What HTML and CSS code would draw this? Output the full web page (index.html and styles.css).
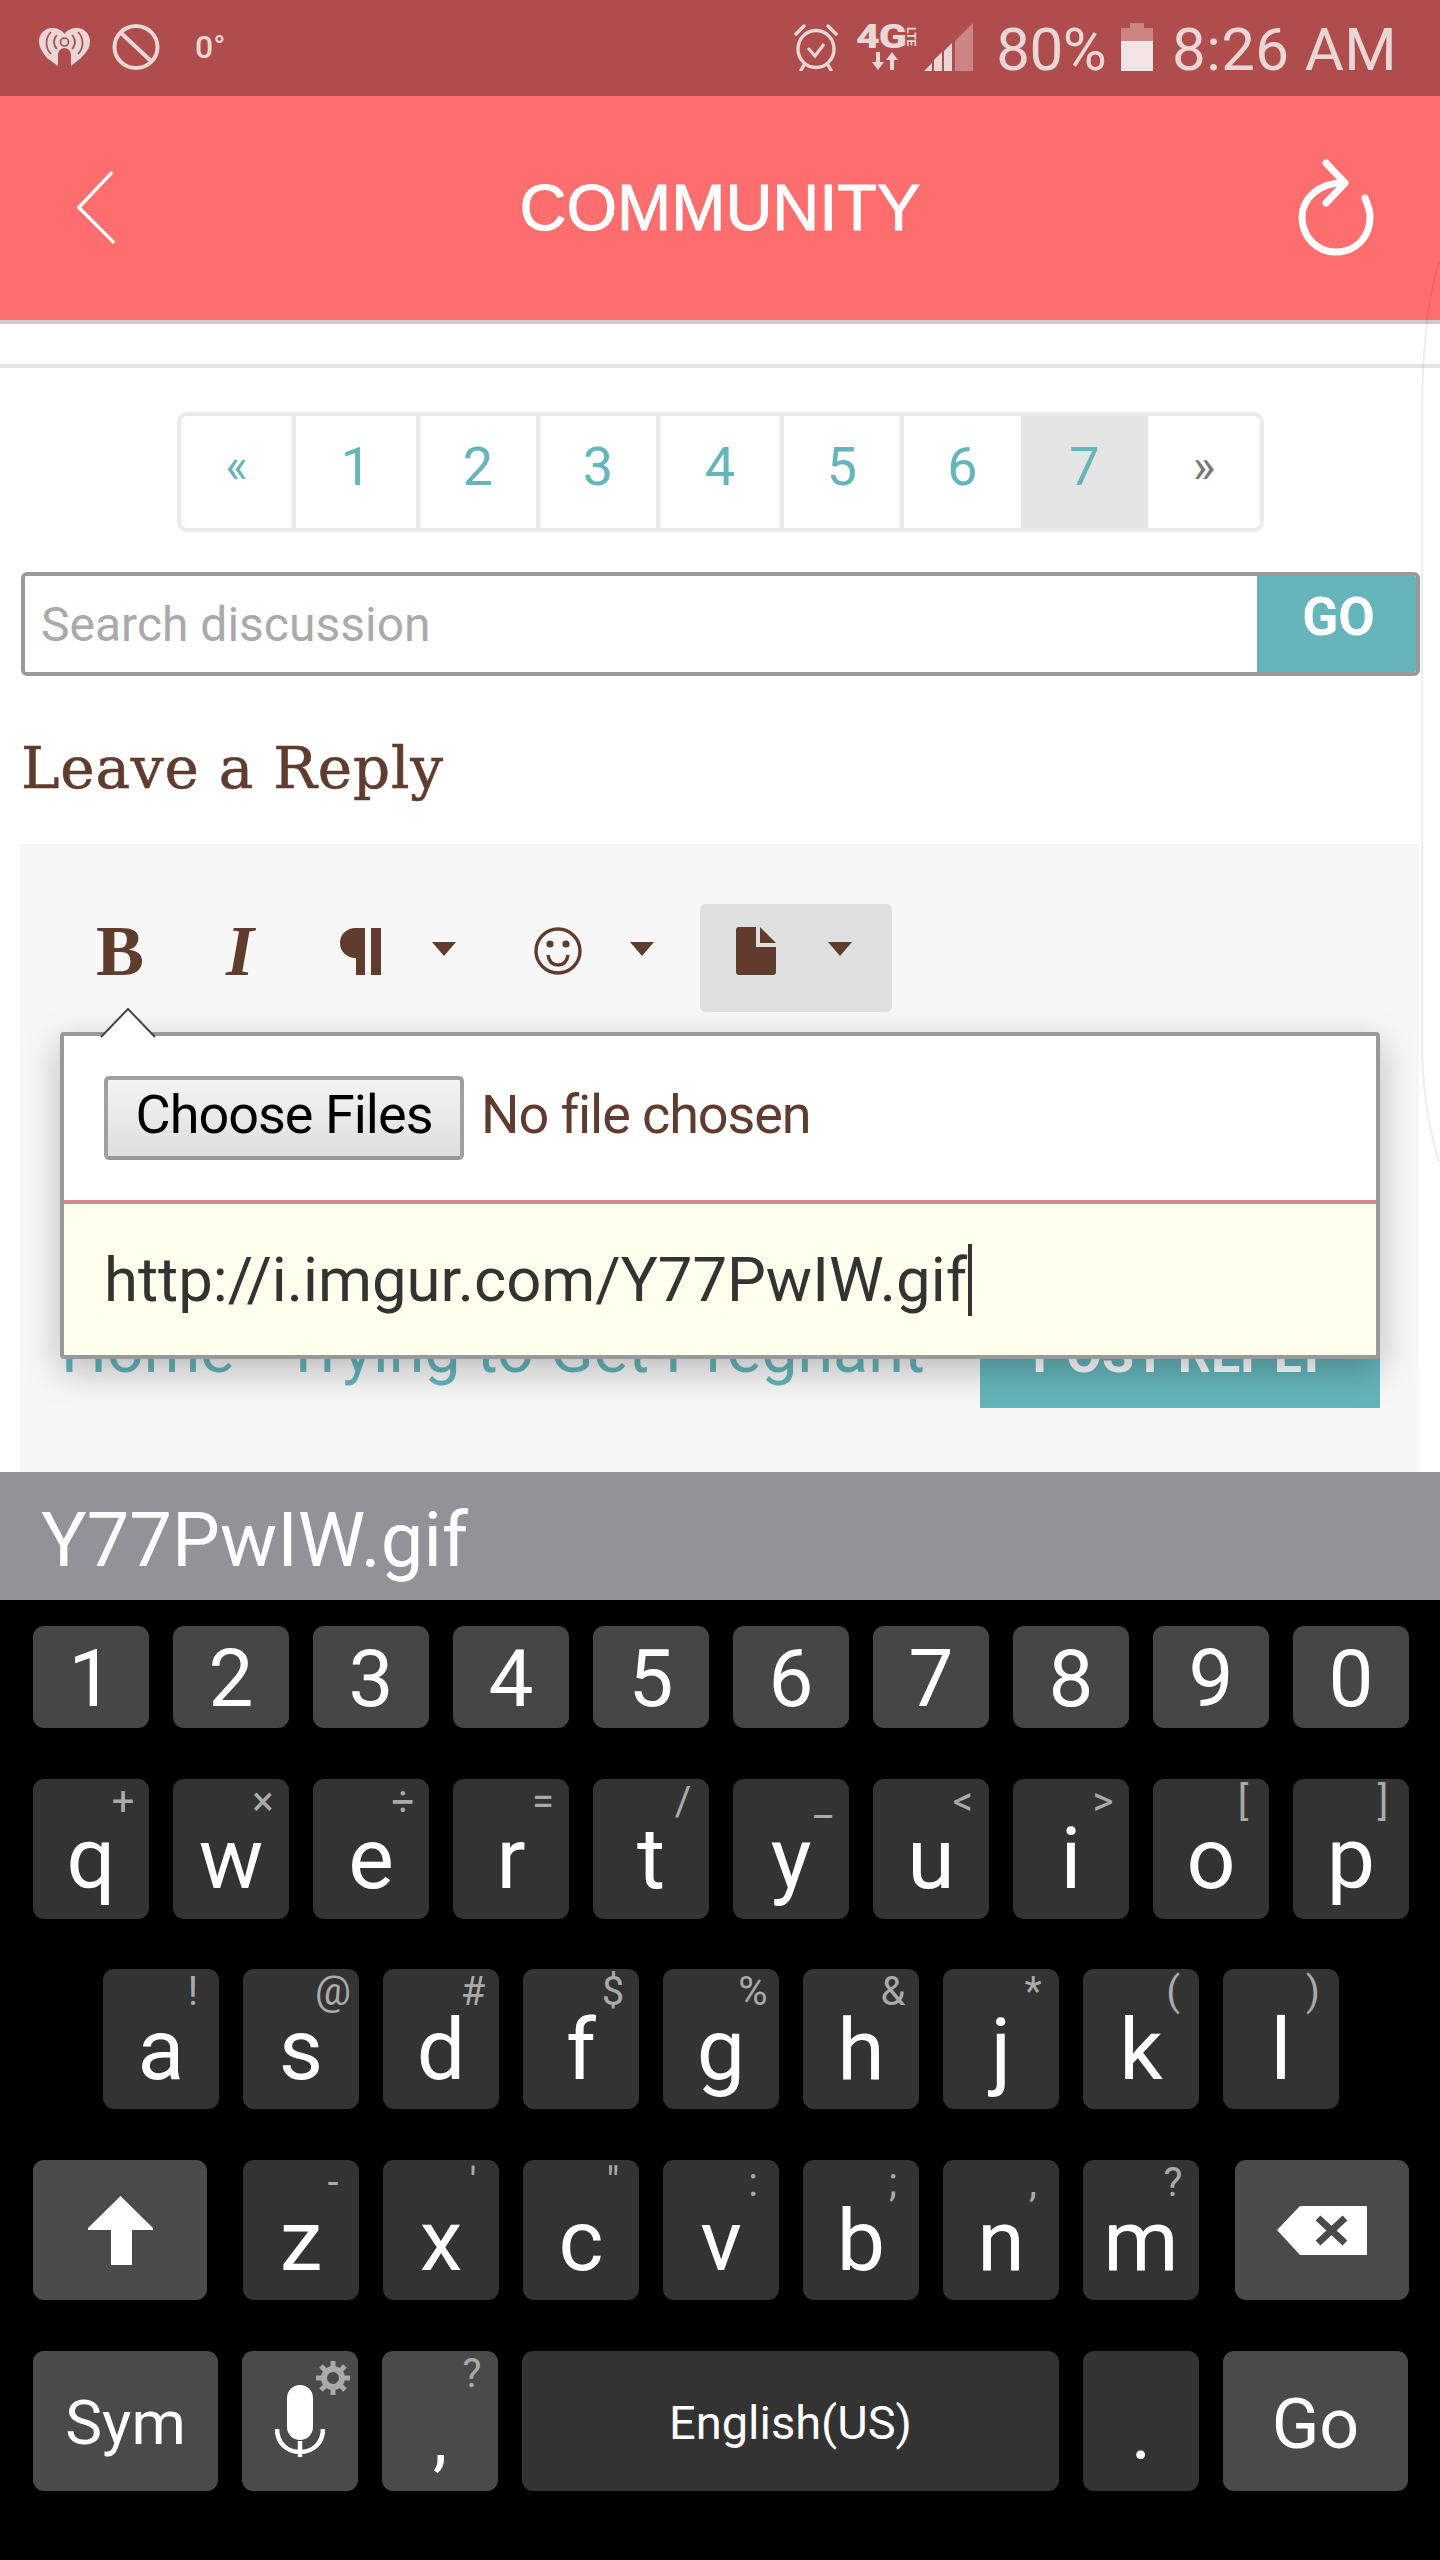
FILE: index.html
```html
<!DOCTYPE html>
<html lang="en">
<head>
  <meta charset="UTF-8">
  <meta name="viewport" content="width=device-width, initial-scale=1.0">
  <title>Community - Leave a Reply</title>
  <link rel="stylesheet" href="styles.css">
</head>
<body>
<div class="screen">

  <!-- Phone status bar -->
  <div class="status-bar">
    <svg class="ic-iheart" viewBox="0 0 51 38">
      <path fill="#ead6d6" d="M25.5 6C22 1 17 0 13 0 6 0 0 6 0 13c0 7 4 12 8 17l11 8V27c0-4 3-7 6.5-7s6.5 3 6.5 7v11l10-8c5-5 9-10 9-17C51 6 45 0 38 0c-4 0-9 1-12.5 6z"/>
      <g fill="none" stroke="#af4d4d" stroke-width="1.7">
        <circle cx="25.5" cy="14" r="4"/>
        <path d="M18 7c-4 4-4 10 0 14M33 7c4 4 4 10 0 14M12 4c-6 6-6 16 0 22M39 4c6 6 6 16 0 22"/>
      </g>
    </svg>
    <svg class="ic-block" viewBox="0 0 48 46" fill="none" stroke="#ead6d6" stroke-width="4">
      <ellipse cx="24" cy="23" rx="21.5" ry="21"/>
      <path d="M9 9l30 28"/>
    </svg>
    <span class="status-temp">0°</span>

    <svg class="ic-alarm" viewBox="0 0 44 48" fill="none" stroke="#ead6d6" stroke-width="3.4">
      <ellipse cx="22" cy="26" rx="18" ry="18.5"/>
      <path d="M14 25l7 8 9-12" stroke-width="3"/>
      <path d="M2 11l8-8M42 11l-8-8M10 42l-3 5M34 42l3 5" stroke-linecap="round"/>
    </svg>
    <div class="status-net">
      <div class="status-net-top"><span class="net-4g">4G</span><span class="net-lte">LTE</span></div>
      <svg class="ic-arrows" viewBox="0 0 30 18" fill="#ead6d6">
        <path d="M4 0h4v10h4l-6 8-6-8h4zM22 18h-4V8h-4l6-8 6 8h-4z"/>
      </svg>
    </div>
    <svg class="ic-signal" viewBox="0 0 49 48" fill="#ead6d6">
      <path d="M0 48h8v-8z"/>
      <path d="M10 48h8V29l-8 8z"/>
      <path d="M20 48h8V20l-8 8z"/>
      <path fill="#cc8484" d="M31 48h18V0L31 18z"/>
    </svg>
    <span class="status-text status-pct">80%</span>
    <svg class="ic-battery" viewBox="0 0 32 48">
      <path fill="#cc8484" d="M9 0h14v5h9v13H0V5h9z"/>
      <path fill="#f2e4e4" d="M0 18h32v30H0z"/>
    </svg>
    <span class="status-text status-time">8:26 AM</span>
  </div>

  <!-- App header -->
  <header class="app-header">
    <svg class="ic-back" viewBox="0 0 44 78" fill="none" stroke="#fff" stroke-width="3.6" stroke-linecap="round" stroke-linejoin="round">
      <path d="M37 3L3 39l36 36"/>
    </svg>
    <div class="app-title">COMMUNITY</div>
    <svg class="ic-refresh" viewBox="0 0 82 100" fill="none" stroke="#fff" stroke-width="7" stroke-linecap="round" stroke-linejoin="round">
      <path d="M69 41C72 48 74 54 74 60 74 81 59 95 40 95 21 95 6 80 6 60 6 41 24 26 46 26"/>
      <path d="M30 6l19 20-19 20"/>
    </svg>
  </header>

  <main class="page">
    <div class="rule"></div>

    <div class="pager">
      <a class="page-cell page-cell-first page-arrow">«</a>
      <a class="page-cell page-cell-wide">1</a>
      <a class="page-cell">2</a>
      <a class="page-cell">3</a>
      <a class="page-cell page-cell-wide">4</a>
      <a class="page-cell">5</a>
      <a class="page-cell">6</a>
      <a class="page-cell page-cell-active">7</a>
      <a class="page-cell page-cell-last page-arrow">»</a>
    </div>

    <form class="search">
      <input class="search-input" type="text" placeholder="Search discussion">
      <button class="search-btn" type="button">GO</button>
    </form>

    <h2 class="reply-title">Leave a Reply</h2>

    <div class="editor">
      <div class="toolbar">
        <div class="tool tool-bold">B</div>
        <div class="tool tool-italic">I</div>
        <div class="tool tool-para">
          <svg class="ic-para" viewBox="0 0 41 48" fill="#5f3c2e">
            <path d="M25 1H16C6 1 0 8 0 16s6 15 16 15v17h9zM31 1h10v47H31z"/>
          </svg>
          <span class="caret"></span>
        </div>
        <div class="tool tool-smile">
          <svg class="ic-smile" viewBox="0 0 48 48" fill="none" stroke="#5f3c2e" stroke-width="3.4">
            <ellipse cx="24" cy="24" rx="22" ry="22"/>
            <circle cx="16" cy="17" r="3.6" fill="#5f3c2e" stroke="none"/>
            <circle cx="32" cy="17" r="3.6" fill="#5f3c2e" stroke="none"/>
            <path d="M14 28c1 7 5 10 10 10s9-3 10-10"/>
          </svg>
          <span class="caret"></span>
        </div>
        <div class="tool tool-file">
          <svg class="ic-file" viewBox="0 0 40 48" fill="#5f3c2e">
            <path d="M3 0h17v20h20v25a3 3 0 0 1-3 3H3a3 3 0 0 1-3-3V3a3 3 0 0 1 3-3z"/>
            <path d="M24 0l16 16H24z"/>
          </svg>
          <span class="caret"></span>
        </div>
      </div>

      <div class="editor-foot">
        <div class="crumbs">
          <a class="crumb-home">Home</a>
          <a>Trying to Get Pregnant</a>
        </div>
        <button class="post-btn" type="button">POST REPLY</button>
      </div>

      <!-- Upload popover opened from the file tool -->
      <div class="popover">
        <svg class="popover-arrow" viewBox="0 0 56 30">
          <path d="M1 29L28 1l27 28" fill="#fff" stroke="#444" stroke-width="2"/>
        </svg>
        <div class="file-row">
          <button class="file-btn" type="button">Choose Files</button>
          <span class="file-name">No file chosen</span>
        </div>
        <div class="url-row">
          <span>http://i.imgur.com/Y77PwIW.gif</span><span class="text-cursor"></span>
        </div>
      </div>
    </div>
  </main>

  <div class="suggest-bar">Y77PwIW.gif</div>

  <!-- Samsung keyboard -->
  <div class="keyboard">
    <div class="kb-row">
      <div class="key key-num">1</div><div class="key key-num">2</div><div class="key key-num">3</div><div class="key key-num">4</div><div class="key key-num">5</div>
      <div class="key key-num">6</div><div class="key key-num">7</div><div class="key key-num">8</div><div class="key key-num">9</div><div class="key key-num">0</div>
    </div>
    <div class="kb-row">
      <div class="key">q<span class="hint">+</span></div>
      <div class="key">w<span class="hint">×</span></div>
      <div class="key">e<span class="hint">÷</span></div>
      <div class="key">r<span class="hint">=</span></div>
      <div class="key">t<span class="hint">/</span></div>
      <div class="key">y<span class="hint">_</span></div>
      <div class="key">u<span class="hint">&lt;</span></div>
      <div class="key">i<span class="hint">&gt;</span></div>
      <div class="key">o<span class="hint">[</span></div>
      <div class="key">p<span class="hint">]</span></div>
    </div>
    <div class="kb-row kb-row-home">
      <div class="key">a<span class="hint">!</span></div>
      <div class="key">s<span class="hint">@</span></div>
      <div class="key">d<span class="hint">#</span></div>
      <div class="key">f<span class="hint">$</span></div>
      <div class="key">g<span class="hint">%</span></div>
      <div class="key">h<span class="hint">&amp;</span></div>
      <div class="key">j<span class="hint">*</span></div>
      <div class="key">k<span class="hint">(</span></div>
      <div class="key">l<span class="hint">)</span></div>
    </div>
    <div class="kb-row">
      <div class="key key-fn key-shift">
        <svg class="ic-shift" viewBox="0 0 65 69" fill="#fff">
          <path d="M32.5 0L65 32v2H44v35H23V34H0v-2z"/>
        </svg>
      </div>
      <div class="key">z<span class="hint">-</span></div>
      <div class="key">x<span class="hint">'</span></div>
      <div class="key">c<span class="hint">"</span></div>
      <div class="key">v<span class="hint">:</span></div>
      <div class="key">b<span class="hint">;</span></div>
      <div class="key">n<span class="hint">,</span></div>
      <div class="key">m<span class="hint">?</span></div>
      <div class="key key-fn key-del">
        <svg class="ic-del" viewBox="0 0 90 49">
          <path fill="#fff" d="M23 0h67v49H23L0 24z"/>
          <path stroke="#4a4a4a" stroke-width="7" d="M41 12l27 25M68 12L41 37"/>
        </svg>
      </div>
    </div>
    <div class="kb-row">
      <div class="key key-fn key-action">Sym</div>
      <div class="key key-fn key-mic">
        <svg class="ic-mic" viewBox="0 0 50 72" fill="none" stroke="#fff" stroke-width="4.5">
          <rect x="12" y="0" width="26" height="55" rx="13" fill="#fff" stroke="none"/>
          <path d="M2 44c0 14 10 23 23 23s23-9 23-23M25 56v16"/>
        </svg>
        <svg class="ic-gear" viewBox="0 0 34 34" fill="none" stroke="#aaa">
          <circle cx="17" cy="17" r="9" stroke-width="6"/>
          <path stroke-width="5" d="M17 0v7M17 27v7M0 17h7M27 17h7M5 5l5 5M24 24l5 5M29 5l-5 5M10 24l-5 5"/>
        </svg>
      </div>
      <div class="key key-fn key-comma">,<span class="hint">?</span></div>
      <div class="key key-space">English(US)</div>
      <div class="key key-period">.</div>
      <div class="key key-fn key-action key-go">Go</div>
    </div>
  </div>

  <svg class="edge-curve" viewBox="0 0 20 900" fill="none" stroke="rgba(0,0,0,0.07)" stroke-width="2">
    <path d="M19 0C6 40 2 100 2 160V790c2 50 8 80 17 110"/>
  </svg>
</div>
</body>
</html>
```

FILE: styles.css
```css
* {
  box-sizing: border-box;
}
body {
  margin: 0;
  background-color: #000;
  font-family: Roboto, Arial, sans-serif;
}
.screen {
  position: relative;
  width: 1440px;
  height: 2560px;
  overflow: hidden;
  display: flex;
  flex-direction: column;
}

/* status bar */
.status-bar {
  height: 96px;
  flex: none;
  display: flex;
  align-items: center;
  padding: 0 43px 2px 39px;
  background-color: #af4d4d;
  color: #ead6d6;
}
.ic-iheart {
  width: 51px;
  height: 38px;
  margin-right: 22px;
}
.ic-block {
  width: 48px;
  height: 46px;
  margin-right: 35px;
}
.status-temp {
  font-size: 32px;
  font-weight: 500;
  margin-right: auto;
}
.ic-alarm {
  width: 44px;
  height: 48px;
  margin-right: 18px;
}
.status-net {
  width: 60px;
  height: 46px;
  margin-right: 8px;
  display: flex;
  flex-direction: column;
}
.status-net-top {
  display: flex;
  height: 26px;
  line-height: 26px;
}
.net-4g {
  width: 49px;
  font-size: 33px;
  font-weight: 900;
  letter-spacing: -1px;
  transform: scaleX(1.25);
  transform-origin: left center;
}
.net-lte {
  writing-mode: vertical-rl;
  font-size: 12px;
  font-weight: 700;
  line-height: 11px;
  text-align: center;
}
.ic-arrows {
  width: 30px;
  height: 18px;
  margin: 2px 0 0 16px;
}
.ic-signal {
  width: 49px;
  height: 48px;
  margin-right: 23px;
}
.status-text {
  font-size: 60px;
  font-weight: 400;
  margin-top: 5px;
  line-height: 70px;
}
.status-pct {
  margin-right: 15px;
  letter-spacing: -0.5px;
}
.status-time {
  letter-spacing: 0.4px;
}
.ic-battery {
  width: 32px;
  height: 48px;
  margin-right: 19px;
}

/* app header */
.app-header {
  height: 228px;
  flex: none;
  display: grid;
  grid-template-columns: 1fr auto 1fr;
  align-items: center;
  padding: 0 62px 2px;
  background-color: #ff6e6e;
  border-bottom: 4px solid #ccc;
}
.ic-back {
  width: 42px;
  height: 75px;
  margin-left: 14px;
}
.app-title {
  font-family: "Liberation Sans", Arial, sans-serif;
  font-size: 65px;
  color: #fff;
  -webkit-text-stroke: 1px #fff;
}
.ic-refresh {
  width: 82px;
  height: 100px;
  justify-self: end;
}

/* page */
.page {
  height: 1148px;
  flex: none;
  padding-top: 40px;
  background-color: #fff;
}
.rule {
  height: 4px;
  background-color: #e5e5e5;
  margin-bottom: 44px;
}
.pager {
  display: flex;
  width: 1087px;
  height: 120px;
  margin: 0 0 40px 177px;
  border: 4px solid #eaeaea;
  border-radius: 10px;
  overflow: hidden;
}
.page-cell {
  width: 120px;
  display: flex;
  align-items: center;
  justify-content: center;
  padding-bottom: 12px;
  border-left: 4px solid #eaeaea;
  color: #65b5bb;
  font-size: 54px;
  font-weight: 400;
}
.page-cell-wide {
  width: 124px;
}
.page-cell-first {
  width: 111px;
  border-left: none;
}
.page-cell-active {
  width: 127px;
  background-color: #e5e5e5;
  border-left: none;
}
.page-cell-last {
  width: 112px;
  border-left: none;
  color: #777;
}
.page-arrow {
  font-size: 48px;
}
.page-cell:nth-child(7) {
  width: 121px;
}

.search {
  display: flex;
  height: 104px;
  margin: 0 20px 0 21px;
  border: 4px solid #999;
  border-radius: 6px;
  overflow: hidden;
}
.search-input {
  flex: 1;
  min-width: 0;
  border: none;
  padding: 0 16px;
  font-family: Roboto, Arial, sans-serif;
  font-size: 48px;
  outline: none;
}
.search-input::placeholder {
  color: #aaa;
}
.search-btn {
  width: 159px;
  border: none;
  padding: 0 0 14px 4px;
  background-color: #65b5bb;
  color: #fff;
  font-family: Roboto, Arial, sans-serif;
  font-size: 53px;
  font-weight: 700;
}
.reply-title {
  height: 72px;
  margin: 56px 0 40px 21px;
  font-family: "DejaVu Serif", serif;
  font-size: 58px;
  font-weight: 400;
  line-height: 72px;
  letter-spacing: 0.8px;
  -webkit-text-stroke: 0.6px #5f3c2e;
  color: #5f3c2e;
}

/* editor */
.editor {
  position: relative;
  height: 628px;
  margin: 0 21px 0 20px;
  padding: 60px 39px 64px 40px;
  display: flex;
  flex-direction: column;
  justify-content: space-between;
  background-color: #f7f7f7;
}
.toolbar {
  display: flex;
}
.tool {
  height: 108px;
  display: flex;
  align-items: center;
  padding-bottom: 14px;
  color: #5f3c2e;
  border-radius: 6px;
}
.tool-bold,
.tool-italic {
  width: 120px;
  justify-content: center;
  font-family: "Liberation Serif", "Times New Roman", serif;
  font-size: 72px;
  font-weight: 700;
}
.tool-italic {
  font-style: italic;
}
.tool-para {
  width: 200px;
  padding-left: 40px;
}
.tool-smile {
  width: 200px;
  padding-left: 34px;
}
.tool-file {
  width: 192px;
  padding-left: 36px;
  background-color: #e0e0e0;
}
.ic-para {
  width: 41px;
  height: 48px;
  margin-right: 51px;
}
.ic-smile {
  width: 48px;
  height: 48px;
  margin-right: 48px;
}
.ic-file {
  width: 40px;
  height: 48px;
  margin-right: 52px;
}
.caret {
  width: 0;
  height: 0;
  margin-bottom: 4px;
  border-left: 12.5px solid transparent;
  border-right: 12.5px solid transparent;
  border-top: 14px solid #5f3c2e;
}
.editor-foot {
  display: flex;
  justify-content: space-between;
  align-items: center;
}
.crumbs {
  display: flex;
  padding: 0 0 8px 1px;
  color: #65b5bb;
  font-size: 64.5px;
}
.crumb-home {
  width: 223px;
}
.post-btn {
  width: 400px;
  height: 108px;
  border: none;
  background-color: #65b5bb;
  color: #fff;
  font-family: Roboto, Arial, sans-serif;
  font-size: 52px;
  font-weight: 700;
}

/* popover over the editor */
.popover {
  position: absolute;
  top: 188px;
  left: 40px;
  width: 1320px;
  height: 327px;
  border: 4px solid #999;
  border-radius: 4px;
  background-color: #fff;
  box-shadow: 0 12px 36px rgba(0, 0, 0, 0.25);
}
.popover-arrow {
  position: absolute;
  top: -28px;
  left: 36px;
  width: 56px;
  height: 30px;
}
.file-row {
  height: 168px;
  display: flex;
  align-items: flex-start;
  padding: 40px 0 0 40px;
  border-bottom: 4px solid #d88888;
}
.file-btn {
  width: 360px;
  height: 84px;
  padding: 0 0 8px;
  border: 4px solid #a0a0a0;
  border-bottom-color: #969696;
  border-radius: 5px;
  background: linear-gradient(#f4f4f4, #dedede);
  color: #000;
  font-family: Roboto, Arial, sans-serif;
  font-size: 54px;
  letter-spacing: -1px;
}
.file-name {
  margin-left: 17px;
  line-height: 78px;
  font-size: 54px;
  letter-spacing: -1.1px;
  color: #5f3c2e;
}
.url-row {
  height: 151px;
  display: flex;
  align-items: center;
  padding-left: 40px;
  background-color: #ffffee;
  color: #333;
  font-size: 61.6px;
}
.text-cursor {
  width: 4px;
  height: 72px;
  margin-left: 1px;
  background-color: #333;
}

.suggest-bar {
  height: 128px;
  flex: none;
  display: flex;
  align-items: center;
  padding: 8px 0 0 41px;
  background-color: #939298;
  color: #fff;
  font-size: 76px;
}

/* keyboard */
.keyboard {
  flex: 1;
  display: flex;
  flex-direction: column;
  gap: 50.7px;
  padding: 26px 0 0 33px;
  background-color: #000;
}
.kb-row {
  display: flex;
  gap: 24px;
}
.kb-row-home {
  padding-left: 70px;
}
.key {
  position: relative;
  width: 116px;
  height: 140px;
  display: flex;
  align-items: center;
  justify-content: center;
  padding-top: 20px;
  border-radius: 11px;
  background-color: #333;
  color: #fff;
  font-size: 86px;
}
.key-num {
  height: 102px;
  padding-top: 4px;
  background-color: #464646;
  font-size: 80px;
}
.key-fn {
  background-color: #4a4a4a;
}
.key-shift {
  width: 174px;
  margin-right: 12px;
  padding-top: 0;
}
.key-del {
  width: 174px;
  margin-left: 12px;
  padding-top: 0;
}
.key-mic {
  padding-top: 0;
}
.key-action {
  width: 185px;
  padding-top: 4px;
  font-size: 62px;
}
.key-go {
  padding-top: 6px;
  font-size: 70px;
}
.key-space {
  width: 537px;
  padding-top: 4px;
  font-size: 47px;
}
.key-comma {
  padding-top: 36px;
  font-size: 72px;
}
.key-period {
  padding-top: 24px;
  font-size: 78px;
}
.hint {
  position: absolute;
  top: 3px;
  right: 0;
  width: 52px;
  text-align: center;
  color: #aaa;
  font-size: 40px;
  line-height: 40px;
}
.ic-shift {
  width: 65px;
  height: 69px;
}
.ic-del {
  width: 90px;
  height: 49px;
}
.ic-mic {
  width: 50px;
  height: 72px;
}
.ic-gear {
  position: absolute;
  top: 10px;
  right: 8px;
  width: 34px;
  height: 34px;
}

.edge-curve {
  position: absolute;
  top: 262px;
  right: 0;
  width: 20px;
  height: 900px;
}
```
